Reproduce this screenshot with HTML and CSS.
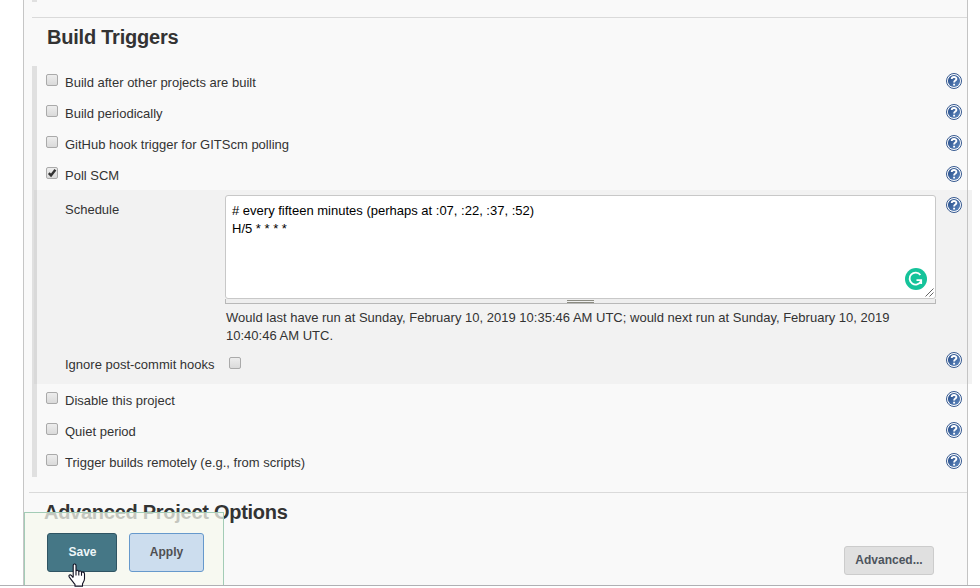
FILE: index.html
```html
<!DOCTYPE html>
<html lang="en">
<head>
<meta charset="utf-8">
<title>Build Triggers</title>
<link rel="stylesheet" href="styles.css">
</head>
<body>
<svg class="defs" aria-hidden="true">
  <defs>
    <linearGradient id="blue" x1="0" y1="0" x2="1" y2="1"><stop offset="0" stop-color="#244a86"/><stop offset="1" stop-color="#6089c0"/></linearGradient>
    <symbol id="help" viewBox="0 0 16 16">
      <circle cx="8" cy="8" r="7.5" fill="#fff" stroke="#35588f"/>
      <circle cx="8" cy="8" r="6.1" fill="url(#blue)"/>
      <path d="M5.7 6.1C5.7 3.4 10.4 3.4 10.4 6C10.4 7.7 8.1 7.5 8.1 9.5M8.1 10.7V12.4" fill="none" stroke="#fff" stroke-width="1.9"/>
    </symbol>
  </defs>
</svg>
<main class="panel">
  <div class="previous"></div>
  <section class="triggers">
    <h2>Build Triggers</h2>
    <div class="group">
      <div class="row"><i class="check"></i><label>Build after other projects are built</label><svg class="help"><use href="#help"/></svg></div>
      <div class="row"><i class="check"></i><label>Build periodically</label><svg class="help"><use href="#help"/></svg></div>
      <div class="row"><i class="check"></i><label>GitHub hook trigger for GITScm polling</label><svg class="help"><use href="#help"/></svg></div>
      <div class="row"><i class="check"><svg viewBox="0 0 12 12"><path d="M2.8 6.2L5 8.4L9.4 2.7" fill="none" stroke="#333" stroke-width="2.4"/></svg></i><label>Poll SCM</label><svg class="help"><use href="#help"/></svg></div>
      <div class="details">
        <div class="schedule">
          <div class="name">Schedule</div>
          <div class="field">
            <div class="textarea"># every fifteen minutes (perhaps at :07, :22, :37, :52)<br>H/5 * * * *
              <svg class="grammar" viewBox="0 0 22 22"><circle cx="11" cy="11" r="11" fill="#15c39a"/><path d="M15.4 7A6 6 0 1 0 16 13.2M11.5 12.2H16.2V16" fill="none" stroke="#fff" stroke-width="1.8"/></svg>
              <svg class="resize" viewBox="0 0 9 9"><path d="M.5 8.5L8.5 .5M4.5 8.5L8.5 4.5" stroke="#666"/></svg>
            </div>
            <div class="handle"><span></span></div>
            <p>Would last have run at Sunday, February 10, 2019 10:35:46 AM UTC; would next run at Sunday, February 10, 2019 10:40:46 AM UTC.</p>
          </div>
          <svg class="help"><use href="#help"/></svg>
        </div>
        <div class="hooks"><div class="name">Ignore post-commit hooks</div><i class="check"></i><svg class="help"><use href="#help"/></svg></div>
      </div>
      <div class="row"><i class="check"></i><label>Disable this project</label><svg class="help"><use href="#help"/></svg></div>
      <div class="row"><i class="check"></i><label>Quiet period</label><svg class="help"><use href="#help"/></svg></div>
      <div class="row"><i class="check"></i><label>Trigger builds remotely (e.g., from scripts)</label><svg class="help"><use href="#help"/></svg></div>
    </div>
  </section>
  <section class="advanced">
    <h2>Advanced Project Options</h2>
    <button class="button more">Advanced...</button>
  </section>
  <div class="savebar"><button class="button save">Save</button><button class="button apply">Apply</button></div>
</main>
<svg class="cursor" viewBox="0 0 18 23" preserveAspectRatio="none"><path d="M5.2 14V2.5C5.2.4 8 .4 8 2.5V8C8.3 6.5 10.8 6.7 10.8 8.5C11.2 7.2 13.5 7.4 13.5 9.2C14.2 8.2 16.5 8.5 16.5 10.5V15C16.5 17 15 18.5 14.5 20V22.2H7V20.5C5 18 2.8 15.5 1.2 13.3C.2 11.6 2.3 10.8 3.3 11.8L5.2 14M8 7.5V12M10.8 8V12M13.5 9V12.3" fill="#fff" stroke="#111122" stroke-width="1.1" stroke-linejoin="round"/></svg>
</body>
</html>
```
FILE: styles.css
```css
* { box-sizing: border-box; }
body {
  margin: 0;
  height: 588px;
  overflow: hidden;
  background: #fff;
  color: #333;
  font: 13px/18px "Liberation Sans", Arial, sans-serif;
}
.defs { position: absolute; width: 0; height: 0; }
svg { display: block; }
.panel {
  position: relative;
  width: 945px;
  height: 585px;
  margin-left: 23px;
  border-left: 1px solid #c6c6c6;
  background: #f9f9f9;
}
.panel::after {
  content: "";
  position: absolute;
  top: 0;
  right: 0;
  width: 1px;
  height: 100%;
  background: #c4c4c4;
}
body::before {
  content: "";
  position: absolute;
  z-index: 2;
  top: 585px;
  width: 980px;
  height: 1px;
  background: #b0b0b4;
}
.previous { width: 5px; height: 2px; margin-left: 8px; background: #e0e0e0; }
.triggers { margin: 15px 0 0 8px; height: 475px; border-top: 1px solid #dadada; }
h2 { margin: 0; font-size: 20px; line-height: 24px; font-weight: bold; letter-spacing: -.27px; }
.triggers h2 { height: 48px; padding: 7px 0 0 15px; letter-spacing: -.22px; }
.group { border-left: 5px solid #e0e0e0; }
.row { display: flex; height: 31px; padding: 7px 6px 0 9px; }
.check {
  flex: none;
  width: 12px;
  height: 12px;
  margin-top: 1px;
  border: 1px solid #aaa;
  border-radius: 2px;
  background: linear-gradient(#ededed, #dadada);
}
.check svg { width: 12px; height: 12px; margin: -1px; }
.row label { margin: 1px 0 0 7px; }
.help { flex: none; width: 16px; height: 16px; margin-left: auto; }
.details {
  height: 194px;
  margin: 0 -4px 0 -3px;
  padding: 5px 10px 0 0;
  border-left: 3px solid #d9d9d9;
  background: #f2f2f2;
}
.schedule { display: flex; height: 155px; }
.name { width: 188px; padding: 6px 0 0 28px; white-space: nowrap; }
.schedule .help { margin-top: 2px; }
.field { width: 711px; }
.textarea {
  position: relative;
  height: 104px;
  padding: 6px 6px;
  border: 1px solid #c8c8c8;
  border-radius: 3px;
  background: #fff;
  color: #000;
}
.grammar { position: absolute; right: 8px; bottom: 8px; width: 22px; height: 22px; }
.resize { position: absolute; right: 1px; bottom: 1px; width: 9px; height: 9px; }
.handle { height: 5px; border: 1px solid #b8b8b8; border-top: 0; background: #eee; }
.handle span { display: block; width: 27px; height: 3px; margin: 0 auto; border: solid #8a8a80; border-width: 1px 0; transform: translateY(1px); }
.field p { margin: 5px 0 0 1px; letter-spacing: .008px; }
.hooks { display: flex; }
.hooks .check { margin: 7px 0 0 4px; }
.hooks .help { margin-top: 2px; }
.advanced { display: flex; justify-content: space-between; margin-left: 5px; border-top: 1px solid #dadada; }
.advanced h2 { padding: 7px 0 0 15px; }
.button { flex: none; height: 39px; padding: 0 0 2px; border: 1px solid; border-radius: 3px; font: bold 12px "Liberation Sans", Arial, sans-serif; }
.more { width: 90px; height: 29px; margin: 53px 34px 0 0; padding: 0 0 2px; border-color: #ccc; background: #e0e0e0; color: #4d545d; }
.savebar {
  position: absolute;
  left: 0;
  top: 512px;
  display: flex;
  gap: 12px;
  width: 200px;
  height: 73px;
  padding: 20px 0 0 22px;
  border: 1px solid #a3ccb6;
  border-bottom: 0;
  background: rgba(246, 248, 238, .75);
}
.save { width: 70px; padding-left: 1px; border-color: #2f5563; background: #457786; color: #eef6f8; }
.apply { width: 75px; border-color: #6699cc; background: #ccddee; color: #4f4f52; }
.cursor { position: absolute; z-index: 3; left: 68px; top: 563px; width: 18px; height: 24px; }
```
